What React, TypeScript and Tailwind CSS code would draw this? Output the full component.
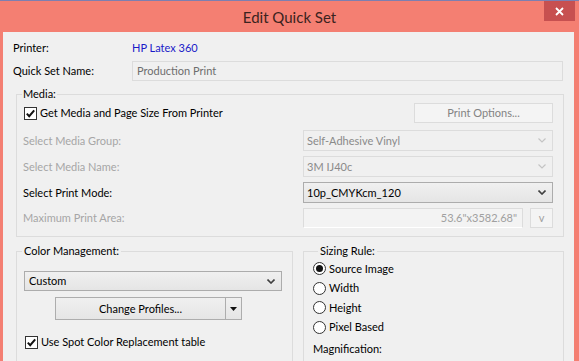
import React from 'react';

const font = { fontFamily: 'Lato, "Noto Sans", "Liberation Sans", sans-serif' };

function Chevron({ disabled }: { disabled?: boolean }) {
  return (
    <svg width="8" height="5" viewBox="0 0 8 5" className="shrink-0">
      <path
        d="M0.5 0.5 L4 4 L7.5 0.5"
        fill="none"
        stroke={disabled ? '#c4c4c4' : '#404040'}
        strokeWidth={disabled ? 1.2 : 1.6}
      />
    </svg>
  );
}

function Check() {
  return (
    <span className="flex h-[13px] w-[13px] shrink-0 items-center justify-center border border-[#333] bg-white">
      <svg width="11" height="11" viewBox="0 0 11 11">
        <path d="M1.8 5.6 L4.2 8.2 L9.2 2.4" fill="none" stroke="#111" strokeWidth="2" />
      </svg>
    </span>
  );
}

function Radio({ on, label }: { on?: boolean; label: string }) {
  return (
    <div className="flex h-[19.5px] items-center gap-[3px]">
      <span className="flex h-[13px] w-[13px] items-center justify-center rounded-full border border-[#333] bg-white">
        {on && <span className="h-[7px] w-[7px] rounded-full bg-[#111]" />}
      </span>
      <span>{label}</span>
    </div>
  );
}

function Combo({ value, disabled }: { value: string; disabled?: boolean }) {
  return (
    <div
      className={
        disabled
          ? 'flex h-[21px] w-[250px] items-center justify-between border border-[#dcdcdc] bg-[#f0f0f0] pl-[3px] pr-[6px] text-[#8a8a8a]'
          : 'flex h-[21px] w-[250px] items-center justify-between border border-[#acacac] bg-gradient-to-b from-[#f0f0f0] to-[#e5e5e5] pl-[3px] pr-[6px] text-black'
      }
    >
      <span>{value}</span>
      <Chevron disabled={disabled} />
    </div>
  );
}

function Row({ label, disabled, children }: { label: string; disabled?: boolean; children: React.ReactNode }) {
  return (
    <div className="flex items-center justify-between pl-[6px]">
      <span className={disabled ? 'text-[#a6a6a6]' : 'text-black'}>{label}</span>
      {children}
    </div>
  );
}

export default function App() {
  return (
    <div
      className="flex h-[361px] w-[579px] flex-col overflow-hidden border-t border-[#7d7fb0] bg-[#f47f72] text-[11px] leading-[16px] text-black"
      style={font}
    >
      {/* title bar */}
      <div className="relative flex h-[31px] shrink-0 items-center justify-center">
        <span className="text-[15px] text-[#3b2320]">Edit Quick Set</span>
        <div className="absolute right-[4px] top-0 flex h-[20px] w-[31px] items-center justify-center bg-[#c75050]">
          <svg width="9" height="9" viewBox="0 0 9 9">
            <path d="M1 1 L8 8 M8 1 L1 8" stroke="#fff" strokeWidth="1.8" />
          </svg>
        </div>
      </div>

      {/* client */}
      <div className="ml-[3px] mr-[5px] flex-1 bg-[#f0f0f0] pt-[6px]">
        <div className="flex h-[20px] items-center">
          <span className="w-[129px] pl-[10px]">Printer:</span>
          <span className="text-[#1a1ac8]">HP Latex 360</span>
        </div>
        <div className="mt-[3px] flex h-[20px] items-center">
          <span className="w-[129px] pl-[10px]">Quick Set Name:</span>
          <div className="flex h-[20px] w-[431px] items-center border border-[#dcdcdc] bg-[#f0f0f0] pl-[4px] text-[#6d6d6d]">
            Production Print
          </div>
        </div>

        {/* Media */}
        <fieldset className="ml-[13px] mr-[10px] mt-[5px] border border-[#dcdcdc] pb-[8px] pr-[10px]">
          <legend className="ml-[5px] px-[1px]">Media:</legend>
          <div className="mt-[1px] flex h-[20px] items-center justify-between pl-[7px]">
            <div className="flex items-center gap-[3px]">
              <Check />
              <span>Get Media and Page Size From Printer</span>
            </div>
            <div className="flex h-[20px] w-[139px] items-center justify-center border border-[#dcdcdc] bg-[#f4f4f4] text-[#838383]">
              Print Options...
            </div>
          </div>
          <div className="mt-[7px] flex flex-col gap-[5px]">
            <Row label="Select Media Group:" disabled>
              <Combo value="Self-Adhesive Vinyl" disabled />
            </Row>
            <Row label="Select Media Name:" disabled>
              <Combo value="3M IJ40c" disabled />
            </Row>
            <Row label="Select Print Mode:">
              <Combo value="10p_CMYKcm_120" />
            </Row>
            <Row label="Maximum Print Area:" disabled>
              <div className="flex w-[250px] items-center justify-between">
                <div className="flex h-[20px] w-[220px] items-center justify-end border border-[#dcdcdc] border-b-white bg-[#f3f3f3] pr-[5px] text-[#a0a0a0]">
                  53.6"x3582.68"
                </div>
                <div className="flex h-[20px] w-[23px] items-center justify-center border border-[#dcdcdc] bg-[#f4f4f4] text-[#a0a0a0]">
                  v
                </div>
              </div>
            </Row>
          </div>
        </fieldset>

        {/* bottom groups */}
        <div className="mt-[6px] flex gap-[10px] pl-[13px] pr-[10px]">
          <fieldset className="w-[277px] border border-[#dcdcdc] pl-[7px] pr-[10px]">
            <legend className="ml-[-2px] px-[2px]">Color Management:</legend>
            <div className="mt-[12px] flex h-[20px] items-center justify-between border border-[#acacac] bg-gradient-to-b from-[#f0f0f0] to-[#e5e5e5] pl-[4px] pr-[6px]">
              <span>Custom</span>
              <Chevron />
            </div>
            <div className="ml-[31px] mt-[6px] flex h-[23px] w-[187px]">
              <div className="flex flex-1 items-center justify-center border border-[#adadad] bg-gradient-to-b from-[#f0f0f0] to-[#e5e5e5]">
                Change Profiles...
              </div>
              <div className="flex w-[16px] items-center justify-center border border-l-0 border-[#adadad] bg-gradient-to-b from-[#f0f0f0] to-[#e5e5e5]">
                <svg width="7" height="4" viewBox="0 0 7 4">
                  <path d="M0 0 H7 L3.5 4 Z" fill="#111" />
                </svg>
              </div>
            </div>
            <div className="mt-[14px] flex h-[16px] items-center gap-[3px] pl-[1px]">
              <Check />
              <span>Use Spot Color Replacement table</span>
            </div>
            <div className="h-[30px]" />
          </fieldset>

          <fieldset className="flex-1 border border-[#dcdcdc] pl-[9px]">
            <legend className="ml-[5px] px-[2px]">Sizing Rule:</legend>
            <div>
              <Radio on label="Source Image" />
              <Radio label="Width" />
              <Radio label="Height" />
              <Radio label="Pixel Based" />
            </div>
            <div className="mt-[4px] flex h-[16px] items-center">Magnification:</div>
            <div className="h-[30px]" />
          </fieldset>
        </div>
      </div>
    </div>
  );
}
